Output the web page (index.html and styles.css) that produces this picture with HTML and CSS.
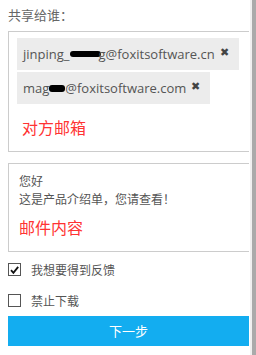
FILE: index.html
```html
<!DOCTYPE html>
<html lang="zh">
<head>
<meta charset="utf-8">
<link rel="stylesheet" href="styles.css">
</head>
<body>
<div class="page">
  <main class="main">
    <div class="title">共享给谁：</div>
    <div class="box recipients">
      <div class="tags">
        <span class="tag">jinping_<span class="blob b1"></span>g@foxitsoftware.cn<span class="close">✖</span></span>
        <span class="tag">mag<span class="blob b2"></span>@foxitsoftware.com<span class="close">✖</span></span>
      </div>
      <div class="note">对方邮箱</div>
    </div>
    <div class="box message">
      <div class="line">您好</div>
      <div class="line">这是产品介绍单，您请查看！</div>
      <div class="note">邮件内容</div>
    </div>
    <label class="check">
      <span class="cb checked"><svg viewBox="0 0 12 12" width="12" height="12"><path d="M2.2 6.2 L4.8 9 L10 2.6" fill="none" stroke="#111" stroke-width="2"/></svg></span>
      <span>我想要得到反馈</span>
    </label>
    <label class="check">
      <span class="cb"></span>
      <span>禁止下载</span>
    </label>
    <div class="btn">下一步</div>
  </main>
  <div class="scrollbar"></div>
</div>
</body>
</html>
```
FILE: styles.css
```css
html, body {
  margin: 0;
  padding: 0;
  background: #fff;
}
body {
  font-family: "Open Sans", "Noto Sans CJK SC", sans-serif;
  color: #555;
  width: 256px;
  height: 355px;
  overflow: hidden;
}
.page {
  display: flex;
  height: 355px;
}
.main {
  flex: 1;
  padding-left: 8px;
  padding-right: 1px;
}
.scrollbar {
  width: 4px;
  background: #aaa;
  border-left: 2px solid #f0f0f0;
}
.title {
  font-size: 13px;
  line-height: 20px;
  height: 26px;
  padding-top: 5px;
  color: #666;
}
.box {
  border: 1px solid #ccc;
  border-right: none;
}
.recipients {
  padding: 6px 8px 12px 8px;
}
.tags {
  display: flex;
  flex-direction: column;
  align-items: flex-start;
  gap: 2px;
}
.tag {
  display: inline-flex;
  align-items: center;
  height: 32px;
  background: #ececec;
  font-size: 13px;
  padding: 0 10px 0 6px;
  white-space: nowrap;
}
.blob {
  display: inline-block;
  height: 6px;
  background: #000;
  border-radius: 3px;
}
.b1 { width: 31px; margin-right: -2px; }
.b2 { width: 16px; height: 7px; }
.close {
  font-size: 11px;
  color: #444;
  margin-left: 5px;
  position: relative;
  top: -3px;
}
.note {
  color: #f33;
  font-size: 16px;
  line-height: 22px;
  margin-top: 13px;
  padding-left: 5px;
}
.message {
  margin-top: 11px;
  padding: 9px 10px 12px 10px;
}
.message .line {
  font-size: 12px;
  line-height: 18px;
}
.message .note {
  margin-top: 8px;
  padding-left: 0;
}
.check {
  display: flex;
  align-items: center;
  gap: 10px;
  height: 31px;
  font-size: 12px;
}
.message + .check {
  margin-top: 2px;
}
.cb {
  width: 11px;
  height: 11px;
  border: 1px solid #555;
  display: flex;
  align-items: center;
  justify-content: center;
  background: #fff;
}
.btn {
  height: 30px;
  line-height: 30px;
  background: #13adf0;
  color: #fff;
  text-align: center;
  font-size: 13px;
}
```
